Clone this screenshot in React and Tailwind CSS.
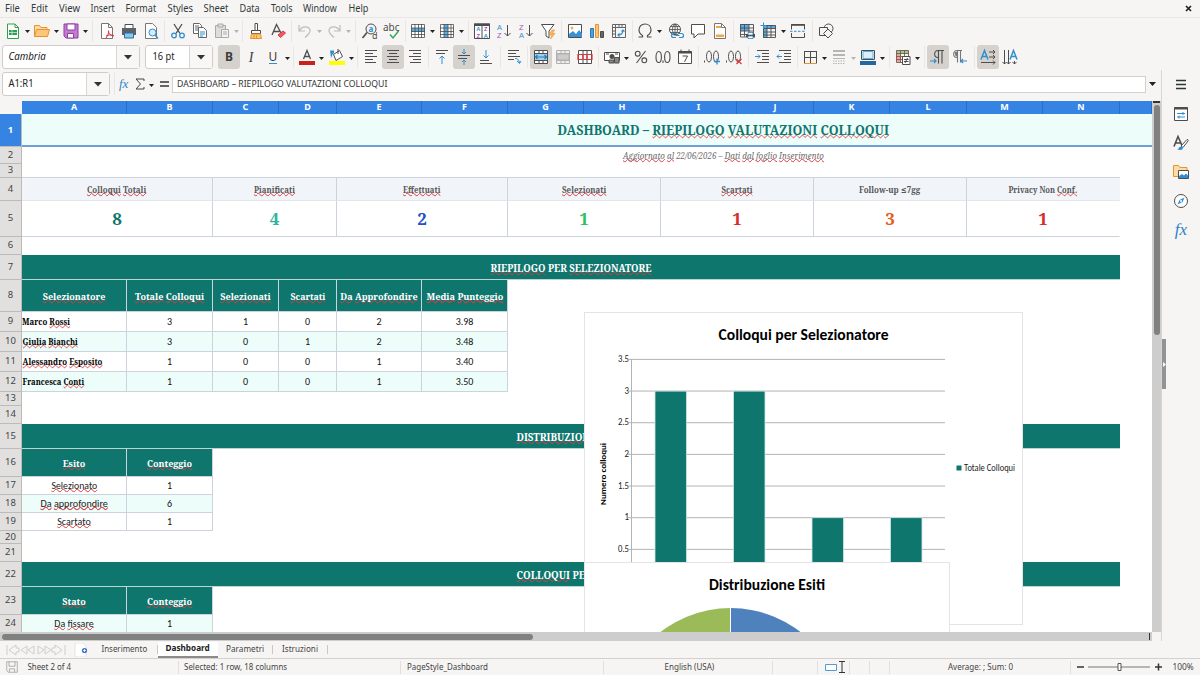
import React, { useLayoutEffect, useRef, useState } from "react";
import clsx from "clsx";

const SANS = "font-['Noto_Sans','Open_Sans',sans-serif]";
const SERIF = "font-['Noto_Serif','DejaVu_Serif_Condensed','DejaVu_Serif','Liberation_Serif',serif]";
const CARLITO = "font-['Carlito','Lato',sans-serif]";

// condensed / expanded text: scales a line to the given width
function Fit({ w, className, children }) {
  const ref = useRef(null);
  const [scale, setScale] = useState(1);

  useLayoutEffect(() => {
    setScale(w / ref.current.offsetWidth);
  }, [w]);

  return (
    <span className="inline-flex shrink-0 justify-center whitespace-nowrap" style={{ width: w }}>
      <span
        ref={ref}
        className={clsx("inline-block shrink-0 whitespace-pre", className)}
        style={{ transform: `scaleX(${scale})` }}
      >
        {children}
      </span>
    </span>
  );
}

// words between ~ get the spell checker's wave
function Spell({ text }) {
  return text.split("~").map((part, i) =>
    i % 2 ? (
      <span
        key={i}
        className="underline decoration-[#e0393e] decoration-wavy decoration-[0.5px] underline-offset-[-0.5px] [text-decoration-skip-ink:none]"
      >
        {part}
      </span>
    ) : (
      part
    )
  );
}

const G = "#4d4d4d";
const B = "#2f8fd0";
const O = "#e8932f";
const R = "#d9363e";

const icons = {
  new: (
    <g fill="none">
      <path d="M2.500 1h7.500l3.500 3.500v11h-11z" fill="#fff" stroke="#2f9e4f" />
      <path d="M10 1v3.500h3.500" stroke="#2f9e4f" />
      <path d="M4 7h8v5H4z" fill="#2f9e4f" />
      <path d="M4 9.500h8M7 7v5" stroke="#fff" strokeWidth=".6" />
    </g>
  ),
  open: (
    <g stroke={O}>
      <path d="M.5 13.500v-11h5l1.500 2h6v3" fill="#fbdca4" />
      <path d="M.5 13.500l2-7h13l-2 7z" fill="#fbc877" />
    </g>
  ),
  save: (
    <g stroke="#8e3fa0">
      <path d="M1 1h14v14H3l-2-2z" fill="#c479d2" />
      <path d="M4 1h8v6H4z" fill="#fff" />
      <path d="M4.500 10.500h6v4.500h-6z" fill="#fff" />
    </g>
  ),
  pdf: (
    <g fill="none">
      <path d="M2.500.5h7l4 4v11h-11z" fill="#fff" stroke="#777" />
      <path d="M9.500.5v4h4" stroke="#777" />
      <path d="M7 15c2-3 3-5 2.500-7.500M9.500 8c0 3 2 4.500 5 5M7 13c2-1 5-1.500 8-.5" stroke={R} />
    </g>
  ),
  print: (
    <g>
      <path d="M4 1.500h8v4H4z" fill="#fff" stroke={G} />
      <path d="M1 5h14v7H1z" fill="#5a6167" />
      <path d="M3.500 10h9v5h-9z" fill="#8ac6ee" stroke="#2b6f9f" />
    </g>
  ),
  preview: (
    <g fill="none">
      <path d="M2.500.5h7l4 4v11h-11z" fill="#fff" stroke="#777" />
      <circle cx="9.500" cy="9.500" r="3.500" fill="#d5ecfa" stroke={B} />
      <path d="M12 12l3 3.500" stroke={B} strokeWidth="1.400" />
    </g>
  ),
  cut: (
    <g fill="none">
      <path d="M4 1l6 9.500M12 1L6 10.500" stroke={G} strokeWidth="1.300" />
      <circle cx="4" cy="12.500" r="2.300" stroke={B} strokeWidth="1.300" />
      <circle cx="12" cy="12.500" r="2.300" stroke={B} strokeWidth="1.300" />
    </g>
  ),
  copy: (
    <g fill="#fff" stroke="#666">
      <path d="M1.500.5h6l2 2v8h-8zM3 3h4M3 5h4M3 7h3" />
      <path d="M6.500 4.500h5l3 3v7h-8z" />
      <path d="M8 9h5M8 11h5M8 13h3" stroke={B} />
    </g>
  ),
  paste: (
    <g fill="#ddd" stroke="#aaa">
      <path d="M1.500 2.500h10v12h-10z" />
      <path d="M4 1h5v3H4z" />
      <path d="M7.500 6.500h7v8h-7zM9 9h4M9 11h4" fill="#f5f4f3" />
    </g>
  ),
  clone: (
    <g>
      <path d="M7 .5h2.500v7H7z" fill="#fff" stroke={G} />
      <path d="M3.500 7.500h9v3h-9z" fill="#fff" stroke={G} />
      <path d="M3.500 11h9l1 4.500h-11z" fill="#fbc877" stroke={O} />
      <path d="M6 12v3M8.500 12v3" stroke={O} />
    </g>
  ),
  clear: (
    <g fill="none">
      <path d="M2 12L6.500 1.500 11 10M3.500 8.500h6" stroke={G} strokeWidth="1.300" />
      <path d="M8 12l5-4 2.500 2-5 4.500z" fill="#ec5c62" stroke={R} />
    </g>
  ),
  undo: <path d="M2 2v6h6M2.500 7.500C5 3 12 2.500 13 7c.5 3-2 5-5 7.500" fill="none" stroke="#bdbdbd" strokeWidth="1.200" />,
  redo: <path d="M14 2v6H8M13.500 7.500C11 3 4 2.500 3 7c-.5 3 2 5 5 7.500" fill="none" stroke="#bdbdbd" strokeWidth="1.200" />,
  find: (
    <g fill="none">
      <circle cx="9" cy="6" r="5" stroke={G} />
      <path d="M5 9.500L.5 15" stroke={G} strokeWidth="1.600" />
      <text x="6.500" y="8.500" fontSize="8" fill={B} fontWeight="700">a</text>
      <text x="10" y="15.500" fontSize="9" fill={G}>d</text>
    </g>
  ),
  abc: (
    <g>
      <text x="-1" y="7.500" fontSize="10" fill={G}>abc</text>
      <path d="M6 11.500l3 3.500 5.500-7" fill="none" stroke="#30a45a" strokeWidth="1.400" />
    </g>
  ),
  rows: (
    <g fill="none">
      <path d="M1 2h14v13H1z" fill="#fff" />
      <path d="M1 5h14v4H1z" fill="#5aaee6" />
      <path d="M1.500 1.500h13v13h-13zM1 5h14M1 8.500h14M1 11.500h14M5 1v14M8.500 1v14M11.500 1v14" stroke={G} strokeWidth=".8" />
    </g>
  ),
  cols: (
    <g fill="none">
      <path d="M1 1h14v14H1z" fill="#fff" />
      <path d="M5 1h4v14H5z" fill="#5aaee6" />
      <path d="M1.500 1.500h13v13h-13zM1 5h14M1 8.500h14M1 11.500h14M5 1v14M9 1v14M12 1v14" stroke={G} strokeWidth=".8" />
    </g>
  ),
  sort: (
    <g fontSize="5.700" fontWeight="700" className="font-['Liberation_Sans',sans-serif]">
      <path d="M.5 1h15v14.500H.5zM8 3v12" fill="#fff" stroke={G} />
      <path d="M0 .5h16v2.500H0z" fill={G} />
      <text x="2.200" y="8.200" fill={B}>A</text>
      <text x="2.400" y="14.700" fill="#a04fc0">Z</text>
      <text x="10" y="8.200" fill="#a04fc0">Z</text>
      <text x="9.800" y="14.700" fill={B}>A</text>
    </g>
  ),
  asc: (
    <g fontSize="7.400" className="font-['Liberation_Sans',sans-serif]">
      <text x="1" y="6.500" fill={B}>A</text>
      <text x="1" y="15.200" fill="#a04fc0">Z</text>
      <path d="M11.500 2v11M8.500 10l3 3 3-3" fill="none" stroke={G} />
    </g>
  ),
  desc: (
    <g fontSize="7.400" className="font-['Liberation_Sans',sans-serif]">
      <text x="1" y="6.500" fill="#a04fc0">Z</text>
      <text x="1" y="15.200" fill={B}>A</text>
      <path d="M11.500 2v11M8.500 10l3 3 3-3" fill="none" stroke={G} />
    </g>
  ),
  filter: (
    <g>
      <path d="M1.500 1.500h12.500L9 8v7l-3-2V8z" fill="#fff" stroke={G} />
      <path d="M12 7l-3 5h3l-1.500 4 4.500-5.500h-2.500L14.500 7z" fill="#f7b765" stroke={O} strokeWidth=".6" />
    </g>
  ),
  image: (
    <g>
      <path d="M1.500 1.500h13v13h-13z" fill="#fff" stroke={G} />
      <path d="M2 14v-3l4-3 3 3 3-4 3 3.500V14z" fill="#3a92d4" />
      <circle cx="5" cy="5" r="1.500" fill="#f5b15a" />
    </g>
  ),
  chart: (
    <g>
      <path d="M1.500 5.500h3v9h-3z" fill="#4aa3e0" stroke="#2a78b5" />
      <path d="M6.500 1.500h3v13h-3z" fill="#fbc877" stroke={O} />
      <path d="M11.500 8.500h3v6h-3z" fill="#666" stroke={G} />
    </g>
  ),
  pivot: (
    <g fill="none">
      <path d="M1.500 1.500h13v13h-13zM1 4.500h14M4.500 1v14M8 1.500v3M11 1.500v3M1.500 8h3M1.500 11h3" stroke="#666" />
      <path d="M7 12c4 0 5-2 5-5M8.500 10.500L7 12l1.500 1.500M10.500 8.500L12 7l1.500 1.500" stroke={B} strokeWidth="1.200" />
    </g>
  ),
  omega: (
    <path d="M1.500 14h4v-1.500C3 11 2 9 2 7c0-3.500 2.500-6 6-6s6 2.500 6 6c0 2-1 4-3.500 5.500V14h4" fill="none" stroke={G} strokeWidth="1.200" />
  ),
  link: (
    <g fill="none">
      <circle cx="7" cy="6.500" r="5.500" stroke={G} />
      <path d="M1.500 6.500h11M7 1v11M2.500 3.500h9M2.500 9.500h9M7 1C3.500 4 3.500 9 7 12M7 1c3.500 3 3.500 8 0 11" stroke={G} strokeWidth=".8" />
      <path d="M8 10.500H5.500a2 2 0 000 4H8M11 10.500h2.500a2 2 0 010 4H11M7.500 12.500h4" stroke={B} strokeWidth="1.200" />
    </g>
  ),
  comment: <path d="M1.500 1.500h13v9.500H8l-4 4v-4H1.500z" fill="#fff" stroke={G} />,
  header: (
    <g>
      <path d="M2.500.5h7l4 4v11h-11z" fill="#fff" stroke="#777" />
      <path d="M4 3h5v2H4zM4 11.500h8v2.500H4z" fill="#f3a647" />
      <path d="M9.500.5v4h4" fill="none" stroke="#777" />
    </g>
  ),
  printArea: (
    <g>
      <path d="M1 1h9v7H1z" fill="#5aaee6" />
      <path d="M1.500 1.500h13v10h-13zM1.500 5h13M1.500 8h13M5.500 1.500v12M10 1.500v10M1.500 11v3H7" fill="none" stroke={G} strokeWidth=".9" />
      <path d="M7 11h9v3.500H7z" fill={G} />
      <path d="M9 9.500h5V12H9zM9 13h5v2.500H9z" fill="#fff" stroke="#2b6f9f" strokeWidth=".7" />
    </g>
  ),
  freeze: (
    <g>
      <path d="M2 2h13v3.500H6V15H2z" fill="#5aaee6" />
      <path d="M2.500 2.500h12v12h-12zM2 5.500h13M2 9h13M2 12h13M6 2v13M10 2v13" fill="none" stroke={G} strokeWidth=".9" />
      <path d="M2.500-.5v6M-.5 2.500h6" stroke={B} />
    </g>
  ),
  split: (
    <g fill="none">
      <path d="M1.500 6.500v-5h13v5M1.500 10v4.500h13V10" stroke={G} />
      <path d="M1 2h14" stroke={G} strokeWidth="1.600" />
      <path d="M0 8.300h16" stroke={B} strokeDasharray="2.500 1.500" />
    </g>
  ),
  shapes: (
    <g fill="#f5f4f3" stroke={G}>
      <circle cx="10.500" cy="5.500" r="4.500" />
      <path d="M1.500 4.500h8v8h-8z" />
      <path d="M10 6l4.500 4.500L10 15l-4.500-4.500z" />
    </g>
  ),
  left: <path d="M2 1.500h12M2 4.500h8M2 7.500h12M2 10.500h8M2 13.500h11" stroke={G} />,
  center: <path d="M2 1.500h12M4 4.500h8M2 7.500h12M4 10.500h8M2 13.500h12" stroke={G} />,
  right: <path d="M2 1.500h12M6 4.500h8M2 7.500h12M6 10.500h8M3 13.500h11" stroke={G} />,
  top: (
    <g fill="none">
      <path d="M2 1.500h12M2 4.500h9" stroke={G} />
      <path d="M8 15V7M5.500 9.500L8 7l2.500 2.500" stroke={B} />
    </g>
  ),
  middle: (
    <g fill="none">
      <path d="M2 6.500h12M2 9.500h9" stroke={G} />
      <path d="M8 0v5M6 3l2 2 2-2M8 16v-5M6 13l2-2 2 2" stroke={B} />
    </g>
  ),
  bottom: (
    <g fill="none">
      <path d="M2 11.500h9M2 14.500h12" stroke={G} />
      <path d="M8 1v8M5.500 6.500L8 9l2.500-2.500" stroke={B} />
    </g>
  ),
  wrap: (
    <g fill="none">
      <path d="M2 1.500h11M2 4.500h8M2 7.500h12M2 10.500h6" stroke={G} />
      <path d="M9 9.500c3 0 4 1.500 4.500 4.500M11 12l2.500 2.500L15 12" stroke={B} />
    </g>
  ),
  merge: (
    <g fill="none">
      <path d="M1.500 1.500h13v13h-13z" fill="#fff" stroke={G} />
      <path d="M2 5h12v6H2z" fill="#9fd0f2" />
      <path d="M1 4.500h14M1 11.500h14M6 1v3.500M10 1v3.500M6 11.500V15M10 11.500V15" stroke={G} />
      <path d="M2.500 8h11M4.500 6l-2 2 2 2M11.500 6l2 2-2 2" stroke="#247ab8" strokeWidth="1.200" />
    </g>
  ),
  mergeCells: (
    <g fill="none" stroke="#b0b0b0">
      <path d="M1.500 1.500h13v13h-13z" fill="#eee" />
      <path d="M2 5h12v6H2z" fill="#ccc" />
      <path d="M1 4.500h14M1 11.500h14M6 1v3.500M10 1v3.500M6 11.500V15M10 11.500V15" />
    </g>
  ),
  unmerge: (
    <g fill="none">
      <path d="M1.500 1.500h13v13h-13zM6 1v14M10 1v14" fill="#fff" stroke={G} />
      <path d="M1 5.500h14v5H1zM6 5v6M10 5v6" stroke={R} strokeWidth="1.200" />
    </g>
  ),
  currency: (
    <g>
      <path d="M.5 3.500h15v8H.5z" fill="#fff" stroke={G} />
      <path d="M2 5h3M11 5h3" stroke={G} />
      <circle cx="8" cy="7.500" r="2.500" fill={G} />
      <path d="M5 11h5v3H5zM10.500 8.500H15V14h-4.500z" fill="#888" stroke={G} />
    </g>
  ),
  percent: (
    <g fill="none" stroke={G} strokeWidth="1.100">
      <circle cx="4.700" cy="4.700" r="2.400" />
      <circle cx="11.300" cy="11.300" r="2.400" />
      <path d="M12.500 2l-9 12" />
    </g>
  ),
  number: (
    <g fill="none" stroke={G} strokeWidth="1.100">
      <ellipse cx="3.700" cy="8" rx="2.700" ry="5.500" />
      <ellipse cx="12.300" cy="8" rx="2.700" ry="5.500" />
      <path d="M8 11.500v2.500" />
    </g>
  ),
  calendar: (
    <g fill="none" stroke={G}>
      <path d="M1.500 2.500h13v12h-13z" fill="#fff" />
      <path d="M1 3.500h14" strokeWidth="2" />
      <path d="M4 .5v3M12 .5v3M5.500 7h5L7.500 13" />
    </g>
  ),
  addDec: (
    <g fill="none">
      <path d="M.5 11.500v2" stroke={G} />
      <ellipse cx="5" cy="7.500" rx="2.500" ry="5.500" stroke={G} />
      <ellipse cx="12" cy="7.500" rx="2.500" ry="5.500" stroke={G} />
      <path d="M10 12.500h6M13 9.500v6" stroke={B} strokeWidth="1.300" />
    </g>
  ),
  delDec: (
    <g fill="none">
      <path d="M.5 11.500v2" stroke={G} />
      <ellipse cx="5" cy="7.500" rx="2.500" ry="5.500" stroke={G} />
      <ellipse cx="12" cy="7.500" rx="2.500" ry="5.500" stroke={G} />
      <path d="M10.500 10l5 5M15.500 10l-5 5" stroke={R} strokeWidth="1.200" />
    </g>
  ),
  indent: (
    <g fill="none">
      <path d="M3 1.500h12M8 4.500h7M8 7.500h7M8 10.500h7M3 13.500h12" stroke={G} />
      <path d="M1 7.500h5M4 5.500l2 2-2 2" stroke={B} />
    </g>
  ),
  outdent: (
    <g fill="none">
      <path d="M3 1.500h12M8 4.500h7M8 7.500h7M8 10.500h7M3 13.500h12" stroke={G} />
      <path d="M1 7.500h5M3 5.500l-2 2 2 2" stroke={B} />
    </g>
  ),
  borders: (
    <g fill="none" stroke={G}>
      <path d="M2.500 2v12M14.500 2v12M2 2.500h13M8.500 2v12M2 8.500h13" />
      <path d="M2 14.500h13" stroke={O} />
    </g>
  ),
  lines: (
    <g stroke="#b5b5b5">
      <path d="M2 2h12M2 6h12" strokeWidth="2.200" />
      <path d="M2 9.500h12" />
      <path d="M2 12h12M2 14.500h12" strokeDasharray="1.500 1" />
    </g>
  ),
  lineColor: (
    <g>
      <path d="M1.500 1.500h13v9h-13z" fill="#fff" stroke={G} />
      <path d="M3 2.500h10v7H3z" fill="#dbeefb" stroke="#5aaee6" />
      <path d="M0 12h16v4H0z" fill="#2466a0" />
    </g>
  ),
  cond: (
    <g fill="none">
      <path d="M1 1h13v4H1z" fill="#8fd19e" />
      <path d="M1 5h5v8H1z" fill="#f0a3a6" />
      <path d="M1.500 1.500h12v12h-12zM1 4.500h13M1 7.500h13M1 10.500h13M5.500 1v13M9.500 1v13" stroke="#7c5a4a" strokeWidth=".9" />
      <path d="M7.500 7.500h7.500v8H7.500z" fill="#fff" stroke={G} />
      <path d="M9 10.500h4.500M9 12.500h4.500M12.500 9l-2.500 5" stroke={G} />
    </g>
  ),
  ltr: (
    <g fill="none">
      <path d="M8 8.500C3.500 8.500 3.500 1.500 8 1.500h6M8.500 1.500v13M12 1.500v13" stroke={G} strokeWidth="1.100" />
      <path d="M0 12h6M4 10l2 2-2 2" stroke={B} strokeWidth="1.200" />
    </g>
  ),
  rtl: (
    <g fill="none">
      <path d="M5 8.500C.5 8.500.5 1.500 5 1.500h5M5.500 1.500v12M8.500 1.500v12" stroke="#777" strokeWidth="1.100" />
      <path d="M2.500 3h3v4.500l-2-.5z" fill="#777" />
      <path d="M15 12H9M11 10l-2 2 2 2" stroke={B} strokeWidth="1.200" />
    </g>
  ),
  horiz: (
    <g fill="none">
      <path d="M1 10.500L4.500 1.500 8 10.500M2.300 7.500h4.400" stroke={B} strokeWidth="1.500" />
      <path d="M9 3h6M13 1l2 2-2 2M9 8h6M13 6l2 2-2 2M1 13.500h14M13 11.500l2 2-2 2" stroke={G} />
    </g>
  ),
  vert: (
    <g fill="none">
      <path d="M8 10.500l3.500-9 3.500 9M9.300 7.500h4.400" stroke={B} strokeWidth="1.500" />
      <path d="M2.500 1v14M.5 13l2 2 2-2M6.500 1v14M4.500 13l2 2 2-2M12.500 12v3M10.500 13l2 2 2-2" stroke={G} />
    </g>
  ),
  fontColor: (
    <g fill="none">
      <path d="M4.500 10L8 1.500l3.500 8.500M5.500 7.500h5" stroke={G} strokeWidth="1.300" />
      <path d="M0 12h16v4H0z" fill="#c9211e" />
    </g>
  ),
  fillColor: (
    <g fill="none">
      <path d="M4.500 5.500l6-4 3 6-6.500 4z" fill="#fff" stroke={G} />
      <path d="M9 0v5" stroke={G} />
      <path d="M1 1.500h4v3H4L2 9z" fill={B} />
      <path d="M0 12h16v4H0z" fill="#ffff00" />
    </g>
  ),
  menu: <path d="M3 3.500h10M3 7.500h10M3 11.500h10" stroke="#2e3436" strokeWidth="1.700" />,
  props: (
    <g fill="none">
      <path d="M1.500 1.500h13v13h-13z" fill="#fff" stroke={G} />
      <path d="M1 2.500h14" stroke={G} strokeWidth="2" />
      <path d="M4 7.500h8M10 6v3M4 11h8M6 9.500v3" stroke={B} />
    </g>
  ),
  styles: (
    <g fill="none">
      <path d="M1 11.500L5 1.500l4 9M2.500 8h5" stroke={G} strokeWidth="1.600" />
      <path d="M8 11l6-6.500c1.500 0 1.500 1 1 1.500L10 12.500z" fill="#fff" stroke={G} />
      <path d="M4 14.500c2 0 1.500-3 4-3s2.500 3.500-.5 3.500z" fill={B} />
    </g>
  ),
  gallery: (
    <g>
      <path d="M.5 12.500v-11h5l1.500 2h7v9z" fill="#fbdca4" stroke={O} />
      <path d="M5.500 6.500h10v8h-10z" fill="#fff" stroke={G} />
      <path d="M6 14v-2l3-2 2 1.500 2-2 2 2V14z" fill={B} />
    </g>
  ),
  navigator: (
    <g>
      <circle cx="8" cy="8" r="6.500" fill="#fff" stroke={G} />
      <path d="M11.500 4.500L9.500 9l-5 2.500L6.500 7z" fill={B} />
      <circle cx="8" cy="8" r="1" fill="#fff" />
    </g>
  ),
};

function Icon({ name, size = 16 }) {
  return (
    <svg width={size} height={size} viewBox="0 0 16 16" className="shrink-0 overflow-visible">
      {icons[name]}
    </svg>
  );
}

function Tool({ name, active, children }) {
  return (
    <div
      className={clsx(
        "flex h-6 w-[22px] shrink-0 items-center justify-center rounded-[3px] text-[#3c3c3c]",
        active && "bg-[#d5d1cd]"
      )}
    >
      {children || <Icon name={name} />}
    </div>
  );
}

function Drop({ faded }) {
  return (
    <div className="flex w-[7px] shrink-0 items-center justify-center pt-[2px]">
      <svg width="5" height="3" viewBox="0 0 5 3">
        <path d="M0 0h5L2.500 3z" fill={faded ? "#b5b5b5" : "#222"} />
      </svg>
    </div>
  );
}

function Sep({ className }) {
  return (
    <div className={clsx("flex shrink-0 justify-center", className)}>
      <div className="h-[22px] w-px bg-[#e9e7e5]" />
    </div>
  );
}

function Combo({ className, text, w, italic, arrow }) {
  return (
    <div className={clsx("flex h-6 shrink-0 rounded-[3px] border border-[#cfccc9] bg-white", className)}>
      <div className="flex flex-1 items-center pl-[6px] text-[10.500px] text-[#222]">
        <Fit w={w} className={italic && "italic"}>
          {text}
        </Fit>
      </div>
      <div className={clsx("flex items-center justify-center border-l border-[#d8d5d2] bg-[#f8f7f6]", arrow)}>
        <svg width="8" height="5" viewBox="0 0 8 5">
          <path d="M0 0h8L4 4.500z" fill="#333" />
        </svg>
      </div>
    </div>
  );
}

const menus = [
  ["File", 15], ["Edit", 17], ["View", 21], ["Insert", 24], ["Format", 31], ["Styles", 26],
  ["Sheet", 25], ["Data", 20], ["Tools", 22], ["Window", 34], ["Help", 20],
];

function MenuBar() {
  return (
    <div className="flex h-[17px] items-center justify-between pr-[8px] pl-[5px] text-[10.500px] text-[#33393b]">
      <div className="flex gap-[10.800px]">
        {menus.map(([label, w]) => (
          <Fit key={label} w={w}>
            {label}
          </Fit>
        ))}
      </div>
      <svg width="7" height="7" viewBox="0 0 7 7">
        <path d="M1 1l5 5M6 1L1 6" stroke="#222" strokeWidth="1.700" />
      </svg>
    </div>
  );
}

function StandardBar() {
  return (
    <div className="flex h-[27px] items-center border-t border-[#e9e7e5] pb-px pl-[2px]">
      <Tool name="new" /><Drop />
      <Tool name="open" /><Drop />
      <Tool name="save" /><Drop />
      <Sep className="w-[7px]" />
      <Tool name="pdf" /><Tool name="print" /><Tool name="preview" />
      <Sep className="w-[5px]" />
      <Tool name="cut" /><Tool name="copy" /><Tool name="paste" /><Drop faded />
      <Sep className="w-[5px]" />
      <Tool name="clone" /><Tool name="clear" />
      <Sep className="w-[5px]" />
      <Tool name="undo" /><Drop faded />
      <Tool name="redo" /><Drop faded />
      <Sep className="w-[7px]" />
      <Tool name="find" /><Tool name="abc" />
      <Sep className="w-[4px]" />
      <Tool name="rows" /><Drop />
      <Tool name="cols" /><Drop />
      <Sep className="w-[6px]" />
      <Tool name="sort" /><Tool name="asc" /><Tool name="desc" /><Tool name="filter" />
      <Sep className="w-[5px]" />
      <Tool name="image" /><Tool name="chart" /><Tool name="pivot" />
      <Sep className="w-[4px]" />
      <Tool name="omega" /><Drop />
      <div className="w-[2px]" />
      <Tool name="link" /><Tool name="comment" /><Tool name="header" />
      <Sep className="w-[5px]" />
      <Tool name="printArea" /><Tool name="freeze" /><Drop />
      <Tool name="split" />
      <Sep className="w-[6px]" />
      <Tool name="shapes" />
    </div>
  );
}

function FormatBar() {
  return (
    <div className="flex h-[26px] items-center pl-[2px]">
      <Combo className="w-[138px]" arrow="w-[23px]" text="Cambria" w={37} italic />
      <Combo className="ml-[5px] w-[68px]" arrow="w-[23px]" text="16 pt" w={22} />
      <div className="w-[5px]" />
      <Tool active><span className="text-[12px] font-bold">B</span></Tool>
      <Tool><span className="font-['Liberation_Serif',serif] text-[14px] italic">I</span></Tool>
      <Tool>
        <span className="border-b border-[#2f8fd0] text-[12px] leading-[12px]">U</span>
      </Tool>
      <Drop />
      <Sep className="w-[5px]" />
      <Tool name="fontColor" /><Drop />
      <div className="w-px" />
      <Tool name="fillColor" /><Drop />
      <Sep className="w-[5px]" />
      <Tool name="left" /><Tool name="center" active /><Tool name="right" />
      <Sep className="w-[5px]" />
      <Tool name="top" /><Tool name="middle" active /><Tool name="bottom" />
      <Sep className="w-[6px]" />
      <Tool name="wrap" />
      <Sep className="w-[5px]" />
      <Tool name="merge" active /><Tool name="mergeCells" /><Tool name="unmerge" />
      <Sep className="w-[5px]" />
      <Tool name="currency" /><Drop />
      <Tool name="percent" /><Tool name="number" /><Tool name="calendar" />
      <Sep className="w-[5px]" />
      <Tool name="addDec" /><Tool name="delDec" />
      <Sep className="w-[6px]" />
      <Tool name="indent" /><Tool name="outdent" />
      <Sep className="w-[4px]" />
      <Tool name="borders" /><Drop />
      <Tool name="lines" /><Drop faded />
      <Tool name="lineColor" /><Drop />
      <Sep className="w-[6px]" />
      <Tool name="cond" /><Drop />
      <Sep className="w-[6px]" />
      <Tool name="ltr" active /><Tool name="rtl" />
      <Sep className="w-[6px]" />
      <Tool name="horiz" active /><Tool name="vert" />
    </div>
  );
}

function FormulaBar() {
  return (
    <div className="flex h-7 items-center pl-[2px]">
      <Combo className="w-[108px]" arrow="w-[23px]" text="A1:R1" w={25} />
      <Sep className="w-[9px]" />
      <span className="w-[13px] font-['Liberation_Serif',serif] text-[13px] text-[#2a83c7] italic">fx</span>
      <svg width="10" height="12" viewBox="0 0 10 12" className="ml-[3px]">
        <path d="M9 3V1H1l4.500 5L1 11h8V9" fill="none" stroke="#444" />
      </svg>
      <div className="w-[3px]" />
      <Drop />
      <svg width="9" height="6" viewBox="0 0 9 6" className="mr-[3px] ml-[5px]">
        <path d="M0 1h9M0 5h9" stroke="#333" strokeWidth="1.500" />
      </svg>
      <div className="flex h-[17px] flex-1 items-center border border-[#d3d0cd] bg-white pl-1 text-[9.500px] text-[#333]">
        <Fit w={210}>DASHBOARD – RIEPILOGO VALUTAZIONI COLLOQUI</Fit>
      </div>
      <svg width="7" height="4" viewBox="0 0 7 4" className="mr-[5px] ml-[3px]">
        <path d="M0 0h7L3.500 4z" fill="#222" />
      </svg>
    </div>
  );
}

const columns = [
  ["A", "w-[105px]"], ["B", "w-[86px]"], ["C", "w-[66px]"], ["D", "w-[58px]"], ["E", "w-[85px]"],
  ["F", "w-[86px]"], ["G", "w-[76px]"], ["H", "w-[77px]"], ["I", "w-[76px]"], ["J", "w-[77px]"],
  ["K", "w-[76px]"], ["L", "w-[77px]"], ["M", "w-[76px]"], ["N", "w-[77px]"], ["", "w-[32px]"],
];

function Row({ n, h, active, children }) {
  return (
    <div className={clsx("flex shrink-0", h)}>
      <div
        className={clsx(
          "flex w-[22px] shrink-0 items-center justify-center border-r border-b border-[#bdbbb9] text-[9.500px]",
          active ? "bg-[#3584e4] font-bold text-white" : "bg-[#e2e0de] text-[#444]"
        )}
      >
        {n}
      </div>
      {children}
    </div>
  );
}

function Cell({ className, children }) {
  return (
    <div className={clsx("flex shrink-0 items-center justify-center overflow-hidden border-r border-b border-[#ccd3dc]", className)}>
      {children}
    </div>
  );
}

const kpis = [
  ["~Colloqui~ ~Totali~", 59, "8", "w-[191px]", "text-[#0f766e]"],
  ["~Pianificati~", 41, "4", "w-[124px]", "text-[#2ab5a0]"],
  ["~Effettuati~", 37, "2", "w-[171px]", "text-[#2450c8]"],
  ["~Selezionati~", 44, "1", "w-[153px]", "text-[#2fbf60]"],
  ["~Scartati~", 31, "1", "w-[153px]", "text-[#d52b2b]"],
  ["Follow-up ≤7gg", 61, "3", "w-[153px]", "text-[#e2601a]"],
  ["Privacy Non ~Conf.~", 69, "1", "w-[153px] border-r-transparent", "text-[#d52b2b]"],
];

const people = [
  [9, "h-[20px]", "Marco ~Rossi~", 48, ["3", "1", "0", "2", "3.98"]],
  [10, "h-[20px]", "~Giulia~ ~Bianchi~", 55, ["3", "0", "1", "2", "3.48"]],
  [11, "h-[20px]", "~Alessandro~ ~Esposito~", 80, ["1", "0", "0", "1", "3.40"]],
  [12, "h-[20px]", "Francesca ~Conti~", 62, ["1", "0", "0", "1", "3.50"]],
];
const peopleCols = ["w-[86px]", "w-[66px]", "w-[58px]", "w-[85px]", "w-[86px]"];

const outcomes = [
  [17, "~Selezionato~", 46, "1"],
  [18, "~Da~ ~approfondire~", 67, "6"],
  [19, "~Scartato~", 33, "1"],
];

function Banner({ text, w }) {
  return (
    <div className={clsx("flex w-[1098px] shrink-0 items-center justify-center border-b border-[#b9d6d3] bg-[#0f766e] pt-[2px] text-[10px] font-bold text-white", SERIF)}>
      <Fit w={w}><Spell text={text} /></Fit>
    </div>
  );
}

function Head({ className, text, w }) {
  return (
    <Cell className={clsx("border-[#b9d6d3] bg-[#0f766e] pt-[2px] text-[9px] font-bold text-white", SERIF, className)}>
      <Fit w={w}><Spell text={text} /></Fit>
    </Cell>
  );
}

function BarChart() {
  const ticks = ["3.5", "3", "2.5", "2", "1.5", "1", "0.5"];
  const bars = [[70, 3], [148.500, 3], [227, 1], [305.500, 1]];
  return (
    <svg width="439" height="313" className={clsx("absolute top-[211px] left-[584px]", CARLITO)}>
      <rect x=".5" y=".5" width="438" height="312" fill="#fff" stroke="#e4e4e4" />
      <text x="219.500" y="27.500" fontSize="15.500" fontWeight="700" textAnchor="middle" textLength="170" lengthAdjust="spacingAndGlyphs">
        Colloqui per Selezionatore
      </text>
      {ticks.map((t, i) => (
        <g key={t}>
          <text x="45" y={50 + i * 31.660} fontSize="9.300" fill="#222" textAnchor="end" textLength={t.length > 1 ? 11 : 4.500} lengthAdjust="spacingAndGlyphs">{t}</text>
          <path d={`M44 ${47.400 + i * 31.660}H361`} stroke="#b3b3b3" />
        </g>
      ))}
      <path d="M47.500 47v215" stroke="#b3b3b3" />
      {bars.map(([x, v]) => (
        <rect key={x} x={x + 1} y={269 - v * 63.300} width="31.500" height={v * 63.300} fill="#0f766e" stroke="#cfe8e4" strokeWidth=".8" />
      ))}
      <text transform="translate(21.500 162) rotate(-90)" fontSize="8.500" fontWeight="700" textAnchor="middle" textLength="62" lengthAdjust="spacingAndGlyphs">
        Numero colloqui
      </text>
      <rect x="372.500" y="153.500" width="5" height="5" fill="#0f766e" />
      <text x="380" y="158.500" fontSize="9.500" fill="#222" textLength="51" lengthAdjust="spacingAndGlyphs">Totale Colloqui</text>
    </svg>
  );
}

function PieChart() {
  return (
    <svg width="366" height="70" className={clsx("absolute top-[461px] left-[584px]", CARLITO)}>
      <rect x=".5" y=".5" width="365" height="90" fill="#fff" stroke="#e4e4e4" />
      <text x="183" y="27.500" fontSize="15.500" fontWeight="700" textAnchor="middle" textLength="116" lengthAdjust="spacingAndGlyphs">
        Distribuzione Esiti
      </text>
      <path d="M146.500 160V46A114 114 0 0 0 32.500 160z" fill="#9bbb59" />
      <path d="M146.500 160V46A114 114 0 0 1 260.500 160z" fill="#4f81bd" />
      <path d="M146.500 46v30" stroke="#fff" />
    </svg>
  );
}

function Sheet() {
  return (
    <div className="relative flex h-[531px] w-[1152px] shrink-0 flex-col overflow-hidden bg-white">
      <div className="flex h-[13px] shrink-0">
        <div className="w-[22px] bg-[#f6f5f4]" />
        {columns.map(([c, w], i) => (
          <div key={i} className={clsx("flex shrink-0 items-center justify-center border-r border-[#2a6fc4] bg-[#3584e4] pb-px text-[9px] font-bold text-white", w)}>
            {c}
          </div>
        ))}
      </div>
      <Row n={1} h="h-[33px]" active>
        <div className={clsx("flex w-[1402px] shrink-0 items-center justify-center border-b-2 border-[#6f9fd8] bg-[#ecfdfa] text-[15px] font-bold text-[#0f766e]", SERIF)}>
          <Fit w={331}><Spell text="DASHBOARD – ~RIEPILOGO~ ~VALUTAZIONI~ ~COLLOQUI~" /></Fit>
        </div>
      </Row>
      <Row n={2} h="h-[17px]">
        <div className={clsx("flex w-[1402px] shrink-0 items-center justify-center text-[9px] text-[#6b6b6b] italic", SERIF)}>
          <Fit w={201}><Spell text="~Aggiornato~ ~al~ 22/06/2026 – ~Dati~ ~dal~ ~foglio~ ~Inserimento~" /></Fit>
        </div>
      </Row>
      <Row n={3} h="h-[14px]">
        <div className="w-[1098px] border-b border-[#ccd3dc]" />
      </Row>
      <Row n={4} h="h-[23px]">
        {kpis.map(([label, w, , cw], i) => (
          <Cell key={i} className={clsx("border-b-[#e3e7ec] bg-[#f1f5f9] pt-px text-[9px] font-bold text-[#575757]", SERIF, cw)}>
            <Fit w={w}><Spell text={label} /></Fit>
          </Cell>
        ))}
      </Row>
      <Row n={5} h="h-[36px]">
        {kpis.map(([, , value, cw, color], i) => (
          <Cell key={i} className={clsx("pt-px text-[17px] font-bold", SERIF, cw, color)}>
            <Fit w={10}>{value}</Fit>
          </Cell>
        ))}
      </Row>
      <Row n={6} h="h-[18px]" />
      <Row n={7} h="h-[25px]"><Banner text="~RIEPILOGO~ PER ~SELEZIONATORE~" w={161} /></Row>
      <Row n={8} h="h-[32px]">
        <Head className="w-[105px]" text="~Selezionatore~" w={63} />
        <Head className="w-[86px]" text="~Totale~ ~Colloqui~" w={69} />
        <Head className="w-[66px]" text="~Selezionati~" w={50} />
        <Head className="w-[58px]" text="~Scartati~" w={35} />
        <Head className="w-[85px]" text="~Da~ ~Approfondire~" w={77} />
        <Head className="w-[86px]" text="~Media~ ~Punteggio~" w={77} />
      </Row>
      {people.map(([n, h, name, w, values], r) => (
        <Row key={n} n={n} h={h}>
          <Cell className={clsx("w-[105px] !justify-start pt-px pl-[0.500px] text-[9.500px] font-bold text-black", SERIF, r % 2 && "bg-[#ecfdfa]")}>
            <Fit w={w}><Spell text={name} /></Fit>
          </Cell>
          {values.map((v, i) => (
            <Cell key={i} className={clsx("text-[10px] text-[#111]", CARLITO, peopleCols[i], r % 2 && "bg-[#ecfdfa]")}>
              {v}
            </Cell>
          ))}
        </Row>
      ))}
      <Row n={13} h="h-[14px]" />
      <Row n={14} h="h-[18px]" />
      <Row n={15} h="h-[25px]"><Banner text="~DISTRIBUZIONE~ ~ESITI~" w={109} /></Row>
      <Row n={16} h="h-[28px]">
        <Head className="w-[105px]" text="~Esito~" w={23} />
        <Head className="w-[86px]" text="~Conteggio~" w={45} />
      </Row>
      {outcomes.map(([n, label, w, value], r) => (
        <Row key={n} n={n} h="h-[18px]">
          <Cell className={clsx("w-[105px] pb-px text-[10px] text-[#222]", CARLITO, r % 2 && "bg-[#ecfdfa]")}>
            <Fit w={w}><Spell text={label} /></Fit>
          </Cell>
          <Cell className={clsx("w-[86px] pb-px text-[10px] text-[#111]", CARLITO, r % 2 && "bg-[#ecfdfa]")}>{value}</Cell>
        </Row>
      ))}
      <Row n={20} h="h-[13px]" />
      <Row n={21} h="h-[18px]" />
      <Row n={22} h="h-[25px]"><Banner text="~COLLOQUI~ PER ~STATO~" w={110} /></Row>
      <Row n={23} h="h-[28px]">
        <Head className="w-[105px]" text="~Stato~" w={23} />
        <Head className="w-[86px]" text="~Conteggio~" w={45} />
      </Row>
      <Row n={24} h="h-[18px]">
        <Cell className={clsx("w-[105px] bg-[#ecfdfa] pb-px text-[10px] text-[#222]", CARLITO)}>
          <Fit w={39}><Spell text="~Da~ ~fissare~" /></Fit>
        </Cell>
        <Cell className={clsx("w-[86px] bg-[#ecfdfa] pb-px text-[10px] text-[#111]", CARLITO)}>1</Cell>
      </Row>
      <BarChart />
      <PieChart />
    </div>
  );
}

function Sidebar() {
  return (
    <div className="flex w-[39px] shrink-0 border-l border-[#d8d5d2]">
      <div className="mt-[269px] flex h-[50px] w-[4px] items-center justify-center bg-[#939393]">
        <svg width="3" height="5" viewBox="0 0 3 5"><path d="M0 0l3 2.500L0 5z" fill="#fff" /></svg>
      </div>
      <div className="ml-[7px] flex flex-col items-center gap-[13px] pt-[7px]">
        <Icon name="menu" />
        <Icon name="props" />
        <Icon name="styles" />
        <Icon name="gallery" />
        <Icon name="navigator" />
        <span className="font-['Liberation_Serif',serif] text-[17px] leading-4 text-[#2a83c7] italic">fx</span>
      </div>
    </div>
  );
}

function Tabs() {
  return (
    <div className="flex h-[17px] shrink-0 items-center text-[9.500px] text-[#444]">
      <svg width="62" height="14" viewBox="0 0 62 14" className="ml-[5px]" fill="none" stroke="#cfcdcb">
        <path d="M2 2v10M11 2L4 7l7 5V9h3V5h-3zM22 3l-6 4 6 4zM29 3l-6 4 6 4zM33 3l6 4-6 4zM40 3l6 4-6 4zM50 2l7 5-7 5V9h-3V5h3zM60 2v10" />
      </svg>
      <svg width="14" height="14" viewBox="0 0 14 14" className="ml-[7px]">
        <path d="M1 0h8l3 3v11H1z" fill="#fff" stroke="#ddd" strokeWidth=".8" />
        <circle cx="10.500" cy="7.500" r="2.600" fill="#3b74c4" />
        <path d="M9 7.500h3M10.500 6v3" stroke="#fff" strokeWidth=".8" />
      </svg>
      <div className="ml-[13px]"><Fit w={46}>Inserimento</Fit></div>
      <div className="ml-[10px] h-[9px] w-px bg-[#c9c7c5]" />
      <div className="flex h-[16px] w-[60px] items-center justify-center border-b-2 border-[#8b8b8b] bg-white font-bold text-[#222]">
        <Fit w={44}>Dashboard</Fit>
      </div>
      <div className="ml-[8px]"><Fit w={38}>Parametri</Fit></div>
      <div className="ml-[8px] h-[9px] w-px bg-[#c9c7c5]" />
      <div className="ml-[9px]"><Fit w={36}>Istruzioni</Fit></div>
      <div className="ml-[9px] h-[9px] w-px bg-[#c9c7c5]" />
    </div>
  );
}

function StatusBar() {
  const bar = "h-[13px] w-px shrink-0 bg-[#e2e0de]";
  return (
    <div className="flex h-[17px] shrink-0 items-center border-t border-[#d3d0cd] text-[9.500px] text-[#444]">
      <svg width="12" height="12" viewBox="0 0 16 16" className="ml-[6px]" fill="none" stroke="#999">
        <path d="M1 1h14v14H3l-2-2zM4 1v6h8V1M4.500 15v-4.500h7V15" />
      </svg>
      <div className="ml-[9px]"><Fit w={44}>Sheet 2 of 4</Fit></div>
      <div className={clsx("ml-[107px]", bar)} />
      <div className="ml-[5px]"><Fit w={103}>Selected: 1 row, 18 columns</Fit></div>
      <div className={clsx("ml-[113px]", bar)} />
      <div className="ml-[6px]"><Fit w={81}>PageStyle_Dashboard</Fit></div>
      <div className={clsx("ml-[115px]", bar)} />
      <div className="ml-[60px]"><Fit w={50}>English (USA)</Fit></div>
      <div className={clsx("ml-[58px]", bar)} />
      <div className={clsx("ml-[44px]", bar)} />
      <svg width="22" height="12" viewBox="0 0 22 12" className="ml-[7px]" fill="none">
        <path d="M.5 3.500h11v6H.5z" fill="#fff" stroke="#4a9edb" />
        <path d="M14 .5h6M14 11.500h6M17 .5v11" stroke="#333" />
      </svg>
      <div className={clsx("ml-[2px]", bar)} />
      <div className={clsx("ml-[19px]", bar)} />
      <div className={clsx("ml-[19px]", bar)} />
      <div className="ml-[58px]"><Fit w={65}>Average: ; Sum: 0</Fit></div>
      <div className={clsx("ml-[57px]", bar)} />
      <svg width="88" height="10" viewBox="0 0 88 10" className="ml-[6px]" fill="none" stroke="#333">
        <path d="M0 5h7M78 5h7M81.500 1.500v7" strokeWidth="1.500" />
        <path d="M11 5h62" stroke="#777" />
        <path d="M41 1.500h3v7h-3z" fill="#fff" stroke="#555" />
      </svg>
      <div className="ml-[8px]"><Fit w={21}>100%</Fit></div>
    </div>
  );
}

export default function App() {
  return (
    <div className={clsx("flex h-[675px] w-[1200px] flex-col overflow-hidden bg-[#f6f5f4]", SANS)}>
      <MenuBar />
      <StandardBar />
      <FormatBar />
      <div className="flex h-[571px] shrink-0">
        <div className="flex w-[1161px] flex-col">
          <FormulaBar />
          <div className="mt-[3px] flex">
            <Sheet />
            <div className="flex w-[9px] flex-col items-center bg-[#cdcdcd]">
              <div className="h-[2px] w-[7px] bg-[#333]" />
              <div className="mt-[2px] h-[230px] w-[6px] rounded-full bg-[#808080]" />
            </div>
          </div>
          <div className="flex h-[9px] shrink-0">
            <div className="flex w-[1152px] items-center justify-between bg-[#cdcdcd] pr-[2px] pl-[2px]">
              <div className="h-[6px] w-[531px] rounded-full bg-[#808080]" />
              <div className="h-[7px] w-px bg-[#333]" />
            </div>
          </div>
        </div>
        <Sidebar />
      </div>
      <Tabs />
      <StatusBar />
    </div>
  );
}
